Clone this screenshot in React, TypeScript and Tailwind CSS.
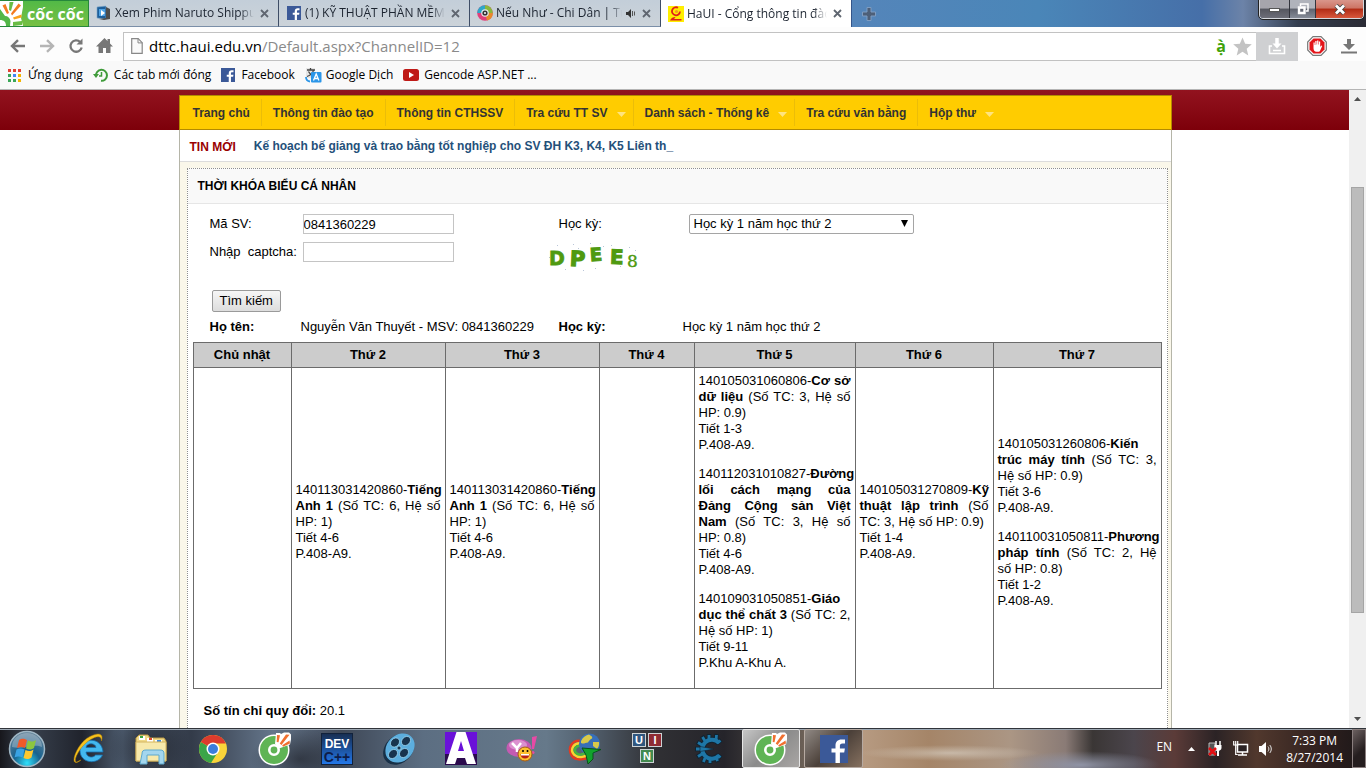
import React from "react";

const BLUE = "#3b5998";

function FacebookIcon({ size }: { size: number }) {
  return (
    <svg width={size} height={size} viewBox="0 0 28 28" className="shrink-0" aria-hidden="true">
      <rect width="28" height="28" fill={BLUE} />
      <path d="M15.500 28V17.500h-4V13.600h4v-3c0-4 2.300-6.200 6-6.200h3.500v4h-2.500c-2 0-2.600 1-2.600 2.500v2.700h5l-.7 3.900h-4.300V28z" fill="#fff" />
    </svg>
  );
}

function CocCocBall() {
  return (
    <svg width="34" height="34" viewBox="0 0 34 34" aria-hidden="true">
      <circle cx="16" cy="18" r="15.500" fill="#fff" />
      <circle cx="16" cy="18" r="14" fill="#5fb455" />
      <path d="M17 12l1-11h4l1 1 3-1.500h5l2 2v5l-1 5-11 4z" fill="#fff" />
      <circle cx="16" cy="18" r="4.700" fill="#5fb455" stroke="#fff" strokeWidth="2.600" />
      <path d="M19 3l3 .3-1.500 7-1.800-.4zM28 2.500l3.500.3-8 10.200-1.800-1.400zM31.500 8.500l.5 3-7 3.300-.8-1.500z" fill="#f07030" />
    </svg>
  );
}

function CloseX() {
  return (
    <svg width="9" height="9" viewBox="0 0 9 9" aria-hidden="true">
      <path d="M1 1l7 7M8 1L1 8" stroke="#5f6670" strokeWidth="1.800" />
    </svg>
  );
}

function PlayerIcon() {
  return (
    <svg width="16" height="16" viewBox="0 0 16 16" className="shrink-0" aria-hidden="true">
      <path d="M1 2l9-1v13l-9-1z" fill="#1d5f9b" stroke="#7fa7c9" strokeWidth=".6" />
      <path d="M3 4h6v7H3z" fill="#4fa4e6" />
      <path d="M5 5l4 3-4 3z" fill="#fff" />
      <path d="M10 2l4 2v10l-6 1-5-1 7-1z" fill="#4d4d4d" />
    </svg>
  );
}

function DiscIcon() {
  return (
    <svg width="16" height="16" viewBox="0 0 16 16" className="shrink-0" aria-hidden="true">
      <circle cx="8" cy="8" r="7.800" fill="#e0407a" />
      <path d="M8 8V.2A7.800 7.800 0 0 1 15.800 8z" fill="#8ab73c" />
      <path d="M8 8H.2A7.800 7.800 0 0 1 8 .2z" fill="#2da6c9" />
      <path d="M8 8h7.800A7.800 7.800 0 0 1 10 15.500z" fill="#e88a2a" />
      <circle cx="8" cy="8" r="3.800" fill="#e8e8e8" />
      <circle cx="8" cy="8" r="2.600" fill="#333" />
      <circle cx="8" cy="8" r="1" fill="#fff" />
    </svg>
  );
}

function HauiIcon() {
  return (
    <svg width="16" height="16" viewBox="0 0 16 16" className="shrink-0" aria-hidden="true">
      <rect width="16" height="16" fill="#ffee00" />
      <path d="M10 1.800A4 4 0 1 0 12 5.500" fill="none" stroke="#e0201b" strokeWidth="1.800" />
      <circle cx="8.500" cy="5.500" r="1.600" fill="#f49a1b" />
      <path d="M2 14.500c1-2.500 3-3.500 5.500-3.500-.5 1-1 1.500-1.500 2h7.500v1.500z" fill="#e0201b" />
    </svg>
  );
}

type TabInfo = { title: string; icon: React.ReactNode; width: string; active?: boolean; sound?: boolean };

const tabs: TabInfo[] = [
  { title: "Xem Phim Naruto Shippu", icon: <PlayerIcon />, width: "w-[190px]" },
  { title: "(1) KỸ THUẬT PHẦN MỀM", icon: <FacebookIcon size={14} />, width: "w-[191px]" },
  { title: "Nếu Như - Chi Dân | Tu", icon: <DiscIcon />, width: "w-[191px]", sound: true },
  { title: "HaUI - Cổng thông tin đào", icon: <HauiIcon />, width: "w-[191px]", active: true },
];

function TabStrip() {
  return (
    <header className="flex h-[27px] shrink-0 items-stretch bg-[linear-gradient(90deg,#6d93bd_0%,#5585ba_62%,#4a86b8_76%,#466fa8_88%,#6c83a8_91%,#333d4e_95%,#2b2b35_100%)]">
      <button className="flex w-[89px] shrink-0 items-center border border-l-0 border-[#27883c] bg-[linear-gradient(180deg,#52b947,#77c043)] text-white" aria-label="Cốc Cốc">
        <svg width="23" height="25" viewBox="0 0 23 25" className="shrink-0" aria-hidden="true">
          <path d="M0 0h23v6L21 17l2 8H0z" fill="#fff" />
          <path d="M2.500 4.500l3-1.500 3.500 9-2 1zM18.500 2.500l2.500 2-9 10-1-2z" fill="#f37b20" />
          <path d="M21.500 13.500v3l-7.500 2-1-2z" fill="#f9a11b" />
          <path d="M0 8l5 7c3 0 5 2 5.500 5L10 25H6c0-4-2-6-6-6z" fill="#53b748" />
          <path d="M9.500 1h4l-2.500 9-2-1z" fill="#6abd45" />
          <path d="M13 21l9-1v4l-9 1z" fill="#6abd45" />
        </svg>
        <span className="flex-1 text-center font-['Open_Sans',sans-serif] text-base leading-6 font-bold">cốc cốc</span>
      </button>
      {tabs.map((t) => (
        <div
          key={t.title}
          className={`${t.width} flex shrink-0 items-center border-r pl-[7px] pr-[9px] ${
            t.active ? "border-[#35558a] bg-white" : "border-b border-b-[#7b8fa8] border-r-[#3e4d66] bg-[linear-gradient(180deg,#c3ced9,#ccd3d9)]"
          }`}
        >
          <span className="flex w-4 shrink-0 justify-center">{t.icon}</span>
          <button className="ml-[3px] h-[26px] min-w-0 flex-1 overflow-hidden text-left text-xs whitespace-nowrap text-[#1c2430] [mask-image:linear-gradient(90deg,#000_90%,transparent)]">
            {t.title}
          </button>
          {t.sound && (
            <svg width="10" height="9" viewBox="0 0 10 9" className="ml-1 shrink-0" aria-hidden="true">
              <path d="M0 3h2l3-3v9L2 6H0z" fill="#333" />
              <path d="M6.500 2v5M8.500 2.500v4" stroke="#555" />
            </svg>
          )}
          <button className="ml-1.5 shrink-0" aria-label="Close tab">
            <CloseX />
          </button>
        </div>
      ))}
      <button className="ml-2.5 flex items-center" aria-label="New tab">
        <svg width="14" height="14" viewBox="0 0 14 14" aria-hidden="true">
          <path d="M5 .5h4V5h4.500v4H9v4.500H5V9H.5V5H5z" fill="#4d5f78" stroke="#7f9cc0" />
        </svg>
      </button>
      <div className="mr-0.5 ml-auto flex h-[19px] w-[105px] overflow-hidden rounded-b border border-t-0 border-[#d5d8de] outline outline-[#222]">
        <button className="flex w-[29px] items-end justify-center bg-[linear-gradient(180deg,#a6a5ac_45%,#55565f_50%,#6d6e78)] pb-1.5" aria-label="Minimize">
          <span className="h-1 w-[11px] border border-[#555] bg-white" />
        </button>
        <button className="flex w-[27px] items-center justify-center border-x border-[#33343c] bg-[linear-gradient(180deg,#b0b3bb_45%,#5f636e_50%,#868c98)]" aria-label="Restore">
          <svg width="12" height="12" viewBox="0 0 12 12" aria-hidden="true">
            <path d="M3.500 3V1h7.500v7H9" fill="none" stroke="#fff" strokeWidth="1.500" />
            <path d="M2 4.500h5.500V10H2z" fill="none" stroke="#fff" strokeWidth="2.400" />
          </svg>
        </button>
        <button className="flex flex-1 items-center justify-center bg-[linear-gradient(180deg,#d9968b_0%,#cd7464_45%,#b12c15_50%,#d8583c)]" aria-label="Close">
          <svg width="12" height="11" viewBox="0 0 12 11" aria-hidden="true">
            <path d="M2 1.500l8 8M10 1.500l-8 8" stroke="#444" strokeWidth="4.500" />
            <path d="M2 1.500l8 8M10 1.500l-8 8" stroke="#fff" strokeWidth="2.800" />
          </svg>
        </button>
      </div>
    </header>
  );
}

function Toolbar() {
  return (
    <div className="flex h-[34px] shrink-0 items-center bg-[#fdfdfd] pt-1">
      <button className="ml-2.5 w-4" aria-label="Back">
        <svg width="16" height="14" viewBox="0 0 16 14" aria-hidden="true">
          <path d="M15 7H2.500M8 1.200L2 7l6 5.800" fill="none" stroke="#777" strokeWidth="2.400" />
        </svg>
      </button>
      <button className="ml-[13px] w-4" aria-label="Forward">
        <svg width="16" height="14" viewBox="0 0 16 14" aria-hidden="true">
          <path d="M1 7h12.500M8 1.200L14 7l-6 5.800" fill="none" stroke="#b5b5b5" strokeWidth="2.400" />
        </svg>
      </button>
      <button className="ml-[13px] w-4" aria-label="Reload">
        <svg width="16" height="16" viewBox="0 0 16 16" aria-hidden="true">
          <path d="M12.200 4A5.700 5.700 0 1 0 13.700 9.500" fill="none" stroke="#777" strokeWidth="2.300" />
          <path d="M8.500 6.500h6V.5z" fill="#777" />
        </svg>
      </button>
      <button className="ml-3 w-4" aria-label="Home">
        <svg width="17" height="16" viewBox="0 0 17 16" aria-hidden="true">
          <path d="M8.500 0L0 8.500h2.500V15H7v-5h3v5h4.500V8.500H17L14 5.500V1h-2.500v2z" fill="#777" />
        </svg>
      </button>
      <div className="ml-[11px] flex h-[29px] flex-1 items-center border border-r-0 border-[#c2c2c2] bg-white">
        <svg width="12" height="16" viewBox="0 0 12 16" className="ml-[7px] shrink-0" aria-hidden="true">
          <path d="M.7.700h6.500l4 4v10.600H.7z" fill="#fafafa" stroke="#888" strokeWidth="1.200" />
          <path d="M7 .7v4.200h4.300" fill="none" stroke="#888" />
        </svg>
        <a href="#address" className="ml-1.5 flex-1 font-['Open_Sans',sans-serif] text-[15px] leading-6 text-[#8a8a8a]">
          <span className="text-black">dttc.haui.edu.vn</span>/Default.aspx?ChannelID=12
        </a>
        <button className="mr-[7px] font-['Open_Sans',sans-serif] text-base leading-5 font-bold text-[#3fa30a]" aria-label="Bộ gõ">
          ạ̀
        </button>
        <svg width="19" height="19" viewBox="0 0 20 20" className="mr-1 shrink-0" aria-hidden="true">
          <path d="M10 .5l2.800 6.600 7 .6-5.400 4.700 1.700 7L10 15.600 3.900 19.400l1.700-7L.2 7.700l7-.6z" fill="#c3c3c3" />
        </svg>
      </div>
      <button className="flex h-[29px] w-[42px] items-center justify-center bg-[#cfd0d2]" aria-label="Save">
        <svg width="18" height="18" viewBox="0 0 18 18" aria-hidden="true">
          <path d="M9 1v8" stroke="#fff" strokeWidth="3.500" />
          <path d="M4.500 6.500h9L9 11.500z" fill="#fff" />
          <path d="M4 9H1.500v7.500h15V9H14M5 13.500h8" fill="none" stroke="#fff" strokeWidth="1.600" />
        </svg>
      </button>
      <button className="ml-[9px]" aria-label="AdBlock">
        <svg width="20" height="20" viewBox="0 0 20 20" aria-hidden="true">
          <path d="M6 .7h8L19.300 6v8L14 19.300H6L.7 14V6z" fill="#fff" stroke="#777" strokeWidth="1.200" />
          <path d="M6.500 2.500h7l4 4v7l-4 4h-7l-4-4v-7z" fill="#e3151a" />
          <path d="M6.500 10V6.500h1.200V9h.6V5h1.300v3.500h.5V4.600h1.300v4h.5V5.500h1.300V11l1-1.500 1 .6-2 4.500c-.4.900-1 1.200-2 1.200H9.400c-1.900 0-2.900-1.600-2.900-3.500z" fill="#fff" />
        </svg>
      </button>
      <button className="mr-[9px] ml-[14px]" aria-label="Downloads">
        <svg width="16" height="16" viewBox="0 0 16 16" aria-hidden="true">
          <path d="M6 1h4v5h4L8 12 2 6h4z" fill="#777" />
          <path d="M0 13.500h16v2H0z" fill="#777" />
        </svg>
      </button>
    </div>
  );
}

function Bookmarks() {
  const dots = ["#e34133", "#e34133", "#e34133", "#3aa757", "#4285f4", "#f4b400", "#3aa757", "#3aa757", "#f4b400"];
  return (
    <nav className="flex h-[29px] shrink-0 items-center border-b border-[#b5b5b5] bg-[#f9f9f9] text-xs text-black">
      <a href="#apps" className="ml-2 flex items-center gap-[7px]">
        <svg width="13" height="13" viewBox="0 0 13 13" aria-hidden="true">
          {dots.map((c, i) => (
            <rect key={i} x={(i % 3) * 5} y={Math.floor(i / 3) * 5} width="3" height="3" fill={c} />
          ))}
        </svg>
        Ứng dụng
      </a>
      <a href="#closed" className="ml-2.5 flex items-center gap-1.5">
        <svg width="15" height="14" viewBox="0 0 15 14" aria-hidden="true">
          <path d="M3 8A5.500 5.500 0 1 1 8 12.800" fill="none" stroke="#3f9b3a" strokeWidth="2" />
          <path d="M0 6h6L3 10z" fill="#3f9b3a" />
          <path d="M8.500 4v4H6" fill="none" stroke="#3f9b3a" strokeWidth="1.500" />
        </svg>
        Các tab mới đóng
      </a>
      <a href="#facebook" className="ml-2.5 flex items-center gap-1.5">
        <FacebookIcon size={14} />
        Facebook
      </a>
      <a href="#translate" className="ml-2.5 flex items-center gap-1">
        <svg width="17" height="16" viewBox="0 0 17 16" aria-hidden="true">
          <path d="M1 1h9v10H1z" fill="#e6e6e6" />
          <path d="M2 3h8M5.500 1v2M8.500 3C8 6 5 8.500 2 9.500M3.500 4.500c1 2 3 4 5 5" fill="none" stroke="#444" strokeWidth="1.300" />
          <rect x="6" y="5" width="10.500" height="10.500" rx="1" fill="#2c96e8" />
          <path d="M8.500 13.500l2.700-6.500 2.700 6.500M9.500 11.500h3.500" fill="none" stroke="#fff" strokeWidth="1.300" />
          <path d="M1 10c0 3 1 4 4 4.500" fill="none" stroke="#2c96e8" strokeWidth="1.800" />
        </svg>
        Google Dịch
      </a>
      <a href="#gencode" className="ml-2.5 flex items-center gap-[5px]">
        <svg width="16" height="12" viewBox="0 0 16 12" aria-hidden="true">
          <rect width="16" height="12" rx="2.500" fill="#bf1a17" />
          <path d="M6 3l5 3-5 3z" fill="#fff" />
        </svg>
        Gencode ASP.NET ...
      </a>
    </nav>
  );
}

const menu: { label: string; drop?: boolean }[] = [
  { label: "Trang chủ" },
  { label: "Thông tin đào tạo" },
  { label: "Thông tin CTHSSV" },
  { label: "Tra cứu TT SV", drop: true },
  { label: "Danh sách - Thống kê", drop: true },
  { label: "Tra cứu văn bằng" },
  { label: "Hộp thư", drop: true },
];

// Each line is [regular, bold, regular]; every line but the last of a description is spread over the cell.
type Line = [string, string, string];
type Course = { lines: Line[]; period: string; room: string };

const english: Course = {
  lines: [["140113031420860-", "Tiếng", ""], ["", "Anh 1", " (Số TC: 6, Hệ số"], ["HP: 1)", "", ""]],
  period: "Tiết 4-6",
  room: "P.408-A9.",
};

const days: { name: string; width: string; courses: Course[] }[] = [
  { name: "Chủ nhật", width: "w-[98px]", courses: [] },
  { name: "Thứ 2", width: "w-[154px]", courses: [english] },
  { name: "Thứ 3", width: "w-[154px]", courses: [english] },
  { name: "Thứ 4", width: "w-[95px]", courses: [] },
  {
    name: "Thứ 5",
    width: "w-[161px]",
    courses: [
      {
        lines: [["140105031060806-", "Cơ sở", ""], ["", "dữ liệu", " (Số TC: 3, Hệ số"], ["HP: 0.9)", "", ""]],
        period: "Tiết 1-3",
        room: "P.408-A9.",
      },
      {
        lines: [
          ["140112031010827-", "Đường", ""],
          ["", "lối cách mạng của", ""],
          ["", "Đảng Cộng sản Việt", ""],
          ["", "Nam", " (Số TC: 3, Hệ số"],
          ["HP: 0.8)", "", ""],
        ],
        period: "Tiết 4-6",
        room: "P.408-A9.",
      },
      {
        lines: [["140109031050851-", "Giáo", ""], ["", "dục thể chất 3", " (Số TC: 2,"], ["Hệ số HP: 1)", "", ""]],
        period: "Tiết 9-11",
        room: "P.Khu A-Khu A.",
      },
    ],
  },
  {
    name: "Thứ 6",
    width: "w-[138px]",
    courses: [
      {
        lines: [["140105031270809-", "Kỹ", ""], ["", "thuật lập trình", " (Số"], ["TC: 3, Hệ số HP: 0.9)", "", ""]],
        period: "Tiết 1-4",
        room: "P.408-A9.",
      },
    ],
  },
  {
    name: "Thứ 7",
    width: "w-[168px]",
    courses: [
      {
        lines: [["140105031260806-", "Kiến", ""], ["", "trúc máy tính", " (Số TC: 3,"], ["Hệ số HP: 0.9)", "", ""]],
        period: "Tiết 3-6",
        room: "P.408-A9.",
      },
      {
        lines: [["140110031050811-", "Phương", ""], ["", "pháp tính", " (Số TC: 2, Hệ"], ["số HP: 0.8)", "", ""]],
        period: "Tiết 1-2",
        room: "P.408-A9.",
      },
    ],
  },
];

function Captcha() {
  const specks = [[12, 3], [28, 2], [45, 1], [58, 4], [66, 3], [8, 22], [20, 27], [38, 28], [75, 24], [90, 8], [4, 15], [50, 26], [84, 5], [33, 6]];
  return (
    <svg width="96" height="31" viewBox="0 0 96 31" role="img" aria-label="captcha" className="-ml-3.5" fontFamily="DejaVu Sans, sans-serif" fontWeight="bold" fill="#4f9a10" stroke="#4f9a10">
      {specks.map(([x, y], i) => (
        <rect key={i} x={x} y={y} width="1" height="1" fill="#b9c5d8" stroke="none" />
      ))}
      <text x="4" y="23" fontSize="19" strokeWidth=".8">D</text>
      <text x="25" y="24" fontSize="21" strokeWidth="1.200" transform="rotate(3 30 16)">P</text>
      <text x="45" y="19" fontSize="18" strokeWidth="1" transform="rotate(-4 50 14)">E</text>
      <text x="65" y="22" fontSize="20" strokeWidth="1" transform="rotate(2 70 16)">E</text>
      <text x="82" y="25" fontSize="17" fontWeight="normal" fontFamily="DejaVu Serif, serif" strokeWidth=".4">8</text>
    </svg>
  );
}

function Timetable() {
  return (
    <table className="w-full table-fixed border-collapse text-[13px] leading-4">
      <thead>
        <tr className="h-[25px] bg-[#cccccc]">
          {days.map((d) => (
            <th key={d.name} className={`${d.width} border border-[#6b6b6b] p-0 font-bold`}>{d.name}</th>
          ))}
        </tr>
      </thead>
      <tbody>
        <tr>
          {days.map((d) => (
            <td key={d.name} className="border border-[#6b6b6b] px-1 pt-[5px] pb-1 align-middle">
              {d.courses.map((c) => (
                <div key={c.lines[0][0]} className="mb-[13px] whitespace-nowrap">
                  {c.lines.map(([before, bold, after], i) => (
                    <div key={i} className={i < c.lines.length - 1 ? "text-justify [text-align-last:justify]" : ""}>
                      {before}
                      {bold && <b>{bold}</b>}
                      {after}
                    </div>
                  ))}
                  <div>{c.period}</div>
                  <div>{c.room}</div>
                </div>
              ))}
            </td>
          ))}
        </tr>
      </tbody>
    </table>
  );
}

function Page() {
  return (
    <main className="min-w-0 flex-1 overflow-hidden bg-[linear-gradient(180deg,#92131f,#7d000a)] bg-size-[100%_40px] bg-no-repeat pt-[5px] pl-px font-['Liberation_Sans',Arial,sans-serif] text-[13px] text-black">
      <div className="mx-auto flex h-full w-[993px] max-w-full flex-col">
        <nav className="flex h-[35px] shrink-0 items-stretch border border-[#b38a00] bg-[#ffcc00] py-[3px] pl-0.5 text-xs font-bold text-[#333]">
          {menu.map((m) => (
            <a key={m.label} href="#menu" className="flex items-center border-r border-[#ebbd08] px-[11px] last:border-r-0">
              {m.label}
              {m.drop && (
                <svg width="9" height="5" viewBox="0 0 9 5" className="mt-1 -mr-1 ml-[9px]" aria-hidden="true">
                  <path d="M0 0h9L4.500 5z" fill="#ffe47f" />
                </svg>
              )}
            </a>
          ))}
        </nav>
        <div className="flex min-h-0 flex-1 flex-col border-x border-[#b5b5a8] bg-[#faf7ea]">
          <div className="flex h-8 shrink-0 items-center border-b border-[#dcdcdc] bg-white px-2.5 text-xs font-bold">
            <span className="pt-[3px] text-[#990000]">TIN MỚI</span>
            <a href="#news" className="ml-[18px] pt-px text-[#24507a]">Kế hoạch bế giảng và trao bằng tốt nghiệp cho SV ĐH K3, K4, K5 Liên th_</a>
          </div>
          <section className="mt-1.5 mr-[3px] ml-[7px] min-h-0 flex-1 overflow-hidden border border-b-0 border-dotted border-[#8f8f8f] bg-white">
            <h1 className="flex h-[35px] items-center border-b border-[#e6e6e6] bg-[#f9f9f9] px-2.5 text-xs font-bold">THỜI KHÓA BIỂU CÁ NHÂN</h1>
            <form className="px-[22px] pt-2.5" onSubmit={(e) => e.preventDefault()}>
              <div className="grid grid-cols-[91px_258px_124px_1fr] gap-y-2">
                <label htmlFor="student" className="leading-5">Mã SV:</label>
                <input id="student" defaultValue="0841360229" className="ml-0.5 h-5 w-[151px] border border-[#c4c4c4]" />
                <label htmlFor="term" className="leading-5">Học kỳ:</label>
                <div className="relative ml-1.5 h-5 w-[225px]">
                  <select id="term" className="h-5 w-full appearance-none rounded-xs border border-[#a5a5a5] bg-white px-1 leading-4">
                    <option>Học kỳ 1 năm học thứ 2</option>
                  </select>
                  <svg width="7" height="7" viewBox="0 0 7 7" className="pointer-events-none absolute top-1.5 right-1.5" aria-hidden="true">
                    <path d="M0 0h7L3.500 7z" fill="#000" />
                  </svg>
                </div>
                <label htmlFor="captcha" className="leading-5">Nhập&nbsp; captcha:</label>
                <input id="captcha" className="ml-0.5 h-5 w-[151px] border border-[#c4c4c4] px-px" />
                <div className="h-8"><Captcha /></div>
              </div>
              <button className="mt-4 ml-0.5 block h-[22px] rounded-xs border border-[#9a9a9a] bg-[linear-gradient(180deg,#f6f6f6,#dddddd)] px-[7px] leading-5">Tìm kiếm</button>
              <div className="grid h-[30px] grid-cols-[91px_258px_124px_1fr] leading-[29px]">
                <b>Họ tên:</b>
                <span>Nguyễn Văn Thuyết - MSV: 0841360229</span>
                <b>Học kỳ:</b>
                <span>Học kỳ 1 năm học thứ 2</span>
              </div>
            </form>
            <div className="px-[5px]">
              <Timetable />
            </div>
            <p className="mt-3 px-4 leading-5"><b>Số tín chỉ quy đổi:</b> 20.1</p>
          </section>
        </div>
      </div>
    </main>
  );
}

function ScrollBar() {
  return (
    <div className="flex w-[17px] shrink-0 flex-col items-center bg-[#f0f0f0] py-[7px]" aria-hidden="true">
      <svg width="7" height="4" viewBox="0 0 7 4"><path d="M3.500 0L7 4H0z" fill="#505050" /></svg>
      <div className="flex w-full flex-1 flex-col px-0.5 pt-[86px] pb-[104px]">
        <div className="flex-1 border border-[#a5a5a5] bg-[#bcbcbc]" />
      </div>
      <svg width="7" height="4" viewBox="0 0 7 4"><path d="M0 0h7L3.500 4z" fill="#505050" /></svg>
    </div>
  );
}

function StartOrb() {
  return (
    <svg width="38" height="38" viewBox="0 0 38 38" aria-hidden="true">
      <defs>
        <radialGradient id="orb" cx="50%" cy="90%" r="85%">
          <stop offset="0" stopColor="#2fe0fb" />
          <stop offset="0.450" stopColor="#17628f" />
          <stop offset="1" stopColor="#5f8098" />
        </radialGradient>
      </defs>
      <circle cx="19" cy="19" r="17.500" fill="url(#orb)" stroke="#9fb6c4" strokeWidth="1.500" />
      <path d="M4 17a15 14 0 0 1 30 0c-8-4-20 3-30 0z" fill="#fff" opacity=".28" />
      <path d="M11 10c3-2 5-1.500 8 0l-2 8c-3-1.500-5-1.500-8 0z" fill="#f0592a" />
      <path d="M20 10.500c3 1.500 5 1.500 8-.5l-2 8c-3 2-5 2-8 .5z" fill="#8cc63f" />
      <path d="M8.500 19.500c3-1.500 5-1.500 8 0l-2 8c-3-1.500-5-1.500-8 0z" fill="#39a3e4" />
      <path d="M17.500 20c3 1.500 5 1.500 8-.5l-2 8c-3 2-5 2-8 .5z" fill="#fdc830" />
    </svg>
  );
}

function IeIcon() {
  return (
    <svg width="34" height="34" viewBox="0 0 34 34" aria-hidden="true">
      <path d="M31 20H14c.5 5.500 7 6.500 9.500 3H30.500C26.500 33 8 32 8 18.500S30 4 31 20zM14 15.500h10c-.5-5-9.500-5-10 0z" fill="#43b8ee" stroke="#166fae" strokeWidth=".8" />
      <path d="M9 28C-5 39 4 11 18 4.500 26 .5 32 1 29.500 9c0-6-5-5-11-1.500C8 14 1 28 4 30c1 .5 2-1 5-2z" fill="#f7c21c" stroke="#b5820a" strokeWidth=".5" />
    </svg>
  );
}

function FolderIcon() {
  return (
    <svg width="34" height="34" viewBox="0 0 34 34" aria-hidden="true">
      <path d="M2 6l3-3h9l2 3h14l2 3v20H2z" fill="#f0d987" stroke="#ba9944" />
      <path d="M5 4h6v4H5zM13 6h6v4h-6zM21 8h7v3h-7z" fill="#fff" />
      <path d="M6 4h3v2H6z" fill="#38a642" />
      <path d="M15 6h3v2h-3z" fill="#e04a29" />
      <path d="M23 8h4v2h-4z" fill="#3c8be0" />
      <path d="M2 10h30v19H2z" fill="#f7e9ab" stroke="#d4b560" />
      <path d="M8 22c0-3 1-4 4-4h14c3 0 4 1 4 4v10h-5v-9H13v9H6z" fill="#a3d6ee" stroke="#5ca8cd" />
    </svg>
  );
}

function ChromeIcon() {
  return (
    <svg width="30" height="30" viewBox="0 0 30 30" aria-hidden="true">
      <circle cx="15" cy="15" r="14" fill="#f9d43a" />
      <path d="M15 15L2.900 8A14 14 0 0 0 13 28.900L20 18z" fill="#3aa548" />
      <path d="M15 15L2.900 8a14 14 0 0 1 24.900 1.500H15z" fill="#dc3b2d" />
      <circle cx="15" cy="15" r="6.500" fill="#fff" />
      <circle cx="15" cy="15" r="5" fill="#3b7ddd" />
    </svg>
  );
}

function DevIcon() {
  return (
    <svg width="32" height="32" viewBox="0 0 32 32" fontFamily="Liberation Sans, sans-serif" fontWeight="bold" textAnchor="middle" aria-hidden="true">
      <defs>
        <linearGradient id="dev" x2="0" y2="1">
          <stop stopColor="#172d50" />
          <stop offset="1" stopColor="#2378eb" />
        </linearGradient>
      </defs>
      <rect x=".5" y=".5" width="31" height="31" fill="url(#dev)" stroke="#12223b" />
      <text x="16" y="15" fontSize="12" fill="#fff">DEV</text>
      <text x="16" y="29" fontSize="14" fill="#0e1d48">C++</text>
    </svg>
  );
}

function ReelIcon() {
  return (
    <svg width="34" height="34" viewBox="0 0 34 34" aria-hidden="true">
      <ellipse cx="16.500" cy="17.500" rx="17" ry="13.500" transform="rotate(-45 16.500 17.500)" fill="#183047" />
      <ellipse cx="18" cy="16" rx="16" ry="13" transform="rotate(-45 18 16)" fill="#5caede" />
      <g fill="#18344f" stroke="#a6dcf5" strokeWidth=".7">
        <ellipse cx="13" cy="10.500" rx="5" ry="4" transform="rotate(-45 13 10.500)" />
        <ellipse cx="24" cy="9" rx="5" ry="4" transform="rotate(-45 24 9)" />
        <ellipse cx="11" cy="22" rx="5" ry="4" transform="rotate(-45 11 22)" />
        <ellipse cx="22" cy="21" rx="5" ry="4" transform="rotate(-45 22 21)" />
        <circle cx="17" cy="16" r="2" />
      </g>
    </svg>
  );
}

function LetterAIcon() {
  return (
    <svg width="32" height="33" viewBox="0 0 32 33" aria-hidden="true">
      <rect width="32" height="33" fill="#6a11d9" />
      <path d="M0 22h32v11H0z" fill="#2b0a4d" />
      <path d="M11.500 0h9L31 32h-9l-2-6h-8l-2 6H1zM16 9l-3 10h6z" fill="#fff" />
    </svg>
  );
}

function YahooIcon() {
  return (
    <svg width="34" height="30" viewBox="0 0 34 30" aria-hidden="true">
      <ellipse cx="13" cy="14" rx="12.500" ry="9" fill="#c45bb2" />
      <ellipse cx="12" cy="11" rx="9" ry="5" fill="#e6a6db" opacity=".7" />
      <path d="M6 9l5 5v4M15 9l-4 5" fill="none" stroke="#fff" strokeWidth="2.500" />
      <path d="M26 3l5-1-3 13h-2z" fill="#e74aa5" />
      <circle cx="27" cy="18.500" r="1.500" fill="#e74aa5" />
      <circle cx="19" cy="20" r="7" fill="#fdc02f" stroke="#a55a14" />
      <path d="M14.500 20h9c0 6-9 6-9 0z" fill="#b82015" />
      <path d="M15 20h8v1.500h-8z" fill="#fff" />
      <circle cx="17" cy="17" r="1" />
      <circle cx="21.500" cy="17" r="1" />
    </svg>
  );
}

function IdmIcon() {
  return (
    <svg width="34" height="32" viewBox="0 0 34 32" aria-hidden="true">
      <g fill="none" strokeWidth="2.500">
        <path d="M14 8C4 6-1 15 4 23c4 5 13 4 18 0" stroke="#e53a20" />
        <path d="M14 10.500C6 9 1.500 16 6 21.500c4 3.500 10 3 14 0" stroke="#fbd430" />
        <path d="M14 13c-6-1-9 3.500-6 7 3 2.500 7 2 10-1" stroke="#45b63f" />
      </g>
      <circle cx="21.500" cy="11" r="10.500" fill="#386fb8" />
      <path d="M13 8c2-4 5-6 8-6.500 2 1.500 4 2 3 4-2 1-3 2-4 4-3 0-4 2-7 .5zM25 9l6 0c.5 3-.5 5-2 7l-4-3z" fill="#d8c94a" />
      <path d="M14 15l19 1.500-8 3.500v6l-5 5-2-9z" fill="#12a32c" stroke="#0a5018" />
    </svg>
  );
}

function UinIcon() {
  return (
    <svg width="30" height="31" viewBox="0 0 30 31" fontFamily="Liberation Sans, sans-serif" fontWeight="bold" fontSize="11" fill="#fff" textAnchor="middle" aria-hidden="true">
      <g stroke="#cdd2d5">
        <rect x=".5" y=".5" width="13" height="13" fill="#31577f" />
        <rect x="16.500" y=".5" width="13" height="13" fill="#8f2b33" />
        <rect x="8.500" y="16.500" width="13" height="13" fill="#438a50" />
      </g>
      <text x="7" y="11">U</text>
      <text x="23" y="11">I</text>
      <text x="15" y="27">N</text>
    </svg>
  );
}

function CheatIcon() {
  return (
    <svg width="30" height="32" viewBox="0 0 30 32" aria-hidden="true">
      <path d="M22.500 1l-.5 7M15 1v6M8 3l3 5M3 9l5 3M1 16h6M3 24l5-3M9 30l2-5M16 31v-6M24 29l-2-5M27 7l-4 3M27 25l-4-3" stroke="#102433" strokeWidth="4.500" />
      <path d="M25 10A9.500 9.500 0 1 0 25 22.500" fill="none" stroke="#102433" strokeWidth="6" />
      <path d="M22.500 2l-.5 6M15 2v5M8.500 4l2.500 4M4 9.500l4 2.500M2 16h5M4 23.500l4-2.500M9.500 29l1.500-4M16 30v-5M23.500 28l-1.500-4M26.500 7.500l-3 2.500M26.500 24.500l-3-2.500" stroke="#1e76a6" strokeWidth="2.800" />
      <path d="M25 10A9.500 9.500 0 1 0 25 22.500" fill="none" stroke="#1e76a6" strokeWidth="4" />
      <path d="M6 13.500l14 2.500-14 2.500z" fill="#1e76a6" stroke="#102433" strokeWidth=".6" />
    </svg>
  );
}

const taskIcons: { name: string; icon: React.ReactNode }[] = [
  { name: "Internet Explorer", icon: <IeIcon /> },
  { name: "Explorer", icon: <FolderIcon /> },
  { name: "Chrome", icon: <ChromeIcon /> },
  { name: "Cốc Cốc", icon: <CocCocBall /> },
  { name: "Dev-C++", icon: <DevIcon /> },
  { name: "Player", icon: <ReelIcon /> },
  { name: "Font tool", icon: <LetterAIcon /> },
  { name: "Yahoo Messenger", icon: <YahooIcon /> },
  { name: "IDM", icon: <IdmIcon /> },
  { name: "UniKey", icon: <UinIcon /> },
  { name: "Cheat Engine", icon: <CheatIcon /> },
];

function Taskbar() {
  return (
    <footer className="flex h-10 shrink-0 items-stretch border-t border-[#30343a] bg-[radial-gradient(ellipse_40px_40px_at_150px_20px,#1b1d24aa,transparent),radial-gradient(ellipse_50px_30px_at_300px_30px,#1b1d2499,transparent),radial-gradient(ellipse_90px_8px_at_950px_24px,#d8d0c4aa,transparent),radial-gradient(ellipse_80px_14px_at_1080px_36px,#8f93a5,transparent),linear-gradient(90deg,#17171c_0%,#39424f_2%,#20232c_6%,#4e5d70_9%,#333b49_14%,#65768b_20%,#3f4857_25%,#5c6e82_31%,#66798a_40%,#53616f_43%,#303034_48%,#25242a_53%,#4b4643_57%,#b79b82_63%,#a58568_68%,#ab9684_74%,#8a7b76_78%,#3a3635_80%,#4b454c_83%,#5b3b38_86%,#2b2325_89%,#51382d_92%,#2d1f1e_97%,#1c1718_100%)] font-['Open_Sans',sans-serif] text-white shadow-[inset_0_1px_0_#9ea9b4]">
      <button className="flex w-[54px] items-center justify-center" aria-label="Start">
        <StartOrb />
      </button>
      <div className="flex items-stretch pl-1">
        {taskIcons.map((t) => (
          <button key={t.name} className="flex w-[62px] items-center justify-center" aria-label={t.name}>
            {t.icon}
          </button>
        ))}
        <button className="ml-0.5 flex w-[58px] items-center justify-center rounded-xs border border-[#e6e6e6] bg-[linear-gradient(135deg,#c6c6c6,#8b8b8b_50%,#a9a6a4)]" aria-label="Cốc Cốc window">
          <CocCocBall />
        </button>
        <button className="ml-1 flex w-[59px] items-center justify-center rounded-xs border border-[#b6aaa2] bg-[linear-gradient(135deg,#908984,#4b4039_50%,#85705f)]" aria-label="Facebook window">
          <FacebookIcon size={28} />
        </button>
      </div>
      <div className="ml-auto flex items-center">
        <span className="mr-4 pb-1 text-xs leading-4">EN</span>
        <svg width="7" height="4" viewBox="0 0 7 4" className="mr-[13px]" aria-hidden="true"><path d="M3.500 0L7 4H0z" fill="#fff" /></svg>
        <svg width="15" height="16" viewBox="0 0 15 16" className="mr-2.5" aria-hidden="true">
          <path d="M1 2h6v12H1z" fill="#555" stroke="#bbb" />
          <path d="M8 0v4M12 0v4" stroke="#fff" strokeWidth="1.500" />
          <path d="M6.500 4h7v3c0 2-2 2.500-2.500 3v5H9v-5c-2-1-2.500-1-2.500-3z" fill="#fff" />
          <path d="M1 7l7 7M8 7l-7 7" stroke="#e30f13" strokeWidth="2.500" />
        </svg>
        <svg width="16" height="15" viewBox="0 0 16 15" className="mr-2.5" aria-hidden="true">
          <path d="M4.500 3.500h10v7.500h-10z" fill="#2b2325" stroke="#fff" strokeWidth="1.500" />
          <path d="M5 14h9M9.500 11v3" stroke="#fff" strokeWidth="1.500" />
          <path d="M.7 0v4h4V0M2.700 0v13.500h2" fill="none" stroke="#fff" strokeWidth="1.200" />
        </svg>
        <svg width="13" height="14" viewBox="0 0 13 14" aria-hidden="true">
          <path d="M0 4h2.500L7 0v14L2.500 10H0z" fill="#fff" />
          <path d="M9 4.500c1.200 1.500 1.200 3.500 0 5M10.800 3c2 2.500 2 5.500 0 8" fill="none" stroke="#ddd" />
        </svg>
        <div className="mr-[9px] ml-3.5 text-center text-xs leading-[17px]">
          <div>7:33 PM</div>
          <div>8/27/2014</div>
        </div>
        <button className="h-full w-[14px] border border-[#8a7f7f] bg-[linear-gradient(135deg,#6b6060,#251e1f_60%)]" aria-label="Show desktop" />
      </div>
    </footer>
  );
}

export default function App() {
  return (
    <div className="flex h-screen flex-col overflow-hidden bg-white font-['Open_Sans','Noto_Sans',sans-serif]">
      <TabStrip />
      <Toolbar />
      <Bookmarks />
      <div className="flex min-h-0 flex-1">
        <Page />
        <ScrollBar />
      </div>
      <Taskbar />
    </div>
  );
}
